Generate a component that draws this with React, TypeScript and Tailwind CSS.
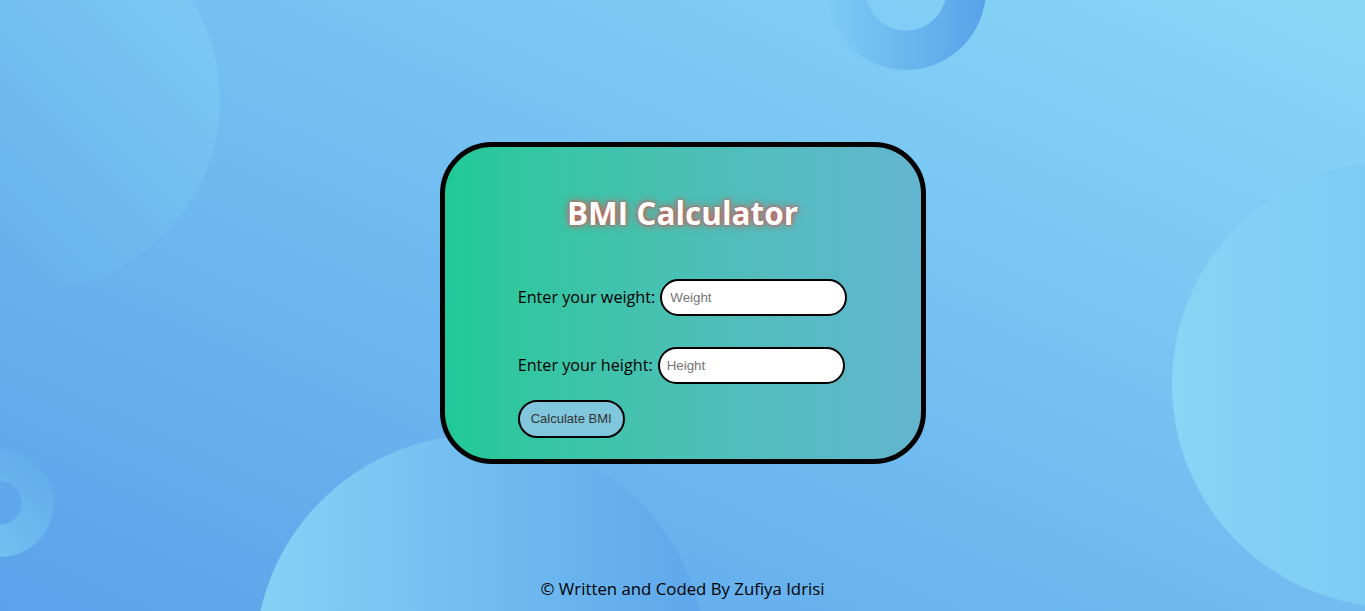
import React from "react";

const comic = "font-['Comic_Sans_MS','Open_Sans',sans-serif]";

export default function App() {
  return (
    <div className="relative h-[611px] w-full overflow-hidden bg-gradient-to-tr from-[#5aa2ea] to-[#89d8f7]">
      {/* decorative background shapes */}
      <div className="pointer-events-none absolute left-[-160px] top-[-90px] h-[380px] w-[380px] rounded-full bg-gradient-to-bl from-[#80cff4] to-[#5ea7eb]" />
      <div className="pointer-events-none absolute left-[826px] top-[-90px] h-[160px] w-[160px] rounded-full bg-gradient-to-r from-[#7dccf3] to-[#58a2ea] [mask-image:radial-gradient(circle,transparent_40px,black_41px)]" />
      <div className="pointer-events-none absolute left-[-54px] top-[449px] h-[108px] w-[108px] rounded-full bg-gradient-to-bl from-[#5ea7eb] to-[#79c9f2] [mask-image:radial-gradient(circle,transparent_21px,black_22px)]" />
      <div className="pointer-events-none absolute left-[255px] top-[435px] h-[450px] w-[450px] rounded-full bg-gradient-to-r from-[#84d2f5] to-[#5ea7eb]" />
      <div className="pointer-events-none absolute left-[1172px] top-[161px] h-[446px] w-[446px] rounded-full bg-gradient-to-r from-[#87d6f6] to-[#6fbdf1]" />

      <div className="relative flex h-full flex-col items-center pt-[142px]">
        <div className="flex w-[486px] flex-col items-center rounded-[52px] border-[5px] border-black bg-gradient-to-r from-[#20c997] to-[#63b5d0] pb-[21px] pt-[46px]">
          <h1
            className={`${comic} text-[31.5px] font-bold leading-[40px] text-white [text-shadow:0_0_8px_#e0504a,0_0_3px_#d04a44]`}
          >
            BMI Calculator
          </h1>
          <div className="mt-[46px] flex flex-col items-start">
            <div className="flex items-center gap-[5px]">
              <label className={`${comic} text-[16.2px] text-black`}>Enter your weight:</label>
              <input
                placeholder="Weight"
                className="h-[37px] w-[187px] rounded-full border-2 border-black bg-white px-[8px] font-['Liberation_Sans',Arial,sans-serif] text-[13.3px] text-black outline-none placeholder:text-[#757575]"
              />
            </div>
            <div className="mt-[31px] flex items-center gap-[5px]">
              <label className={`${comic} text-[16.2px] text-black`}>Enter your height:</label>
              <input
                placeholder="Height"
                className="h-[37px] w-[187px] rounded-full border-2 border-black bg-white px-[7px] font-['Liberation_Sans',Arial,sans-serif] text-[13.3px] text-black outline-none placeholder:text-[#757575]"
              />
            </div>
            <button className="mt-[16px] h-[38px] w-[107px] rounded-full border-2 border-black bg-[#80c6dc] font-['Liberation_Sans',Arial,sans-serif] text-[13px] text-[#333]">
              Calculate BMI
            </button>
          </div>
        </div>
        <div className="flex-1" />
        <footer className={`${comic} pb-[11px] text-[16.8px] leading-[22px] text-black`}>
          © Written and Coded By Zufiya Idrisi
        </footer>
      </div>
    </div>
  );
}
